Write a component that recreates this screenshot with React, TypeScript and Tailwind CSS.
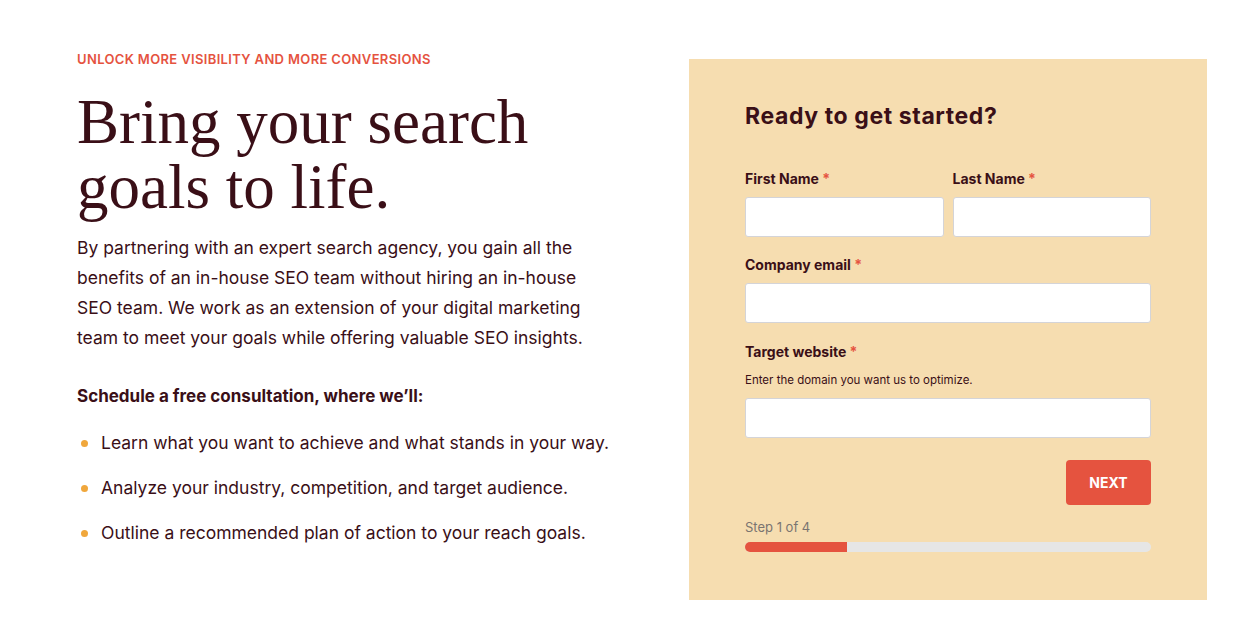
import React from "react";

const sans = { fontFamily: '"Inter", "Noto Sans", sans-serif' };

function Field({ label, help, className = "" }: { label: string; help?: string; className?: string }) {
  return (
    <div className={`flex flex-col ${className}`}>
      <label className="text-[14px] font-bold text-[#3a0f17] leading-[18px]">
        {label} <span className="text-[#e5533f]">*</span>
      </label>
      {help && <p className="mt-[12px] text-[11.5px] text-[#3a0f17] leading-[14px]">{help}</p>}
      <div className={`${help ? "mt-[11px]" : "mt-[9px]"} h-[40px] bg-white border border-[#d4d4d8] rounded-[3px]`} />
    </div>
  );
}

export default function App() {
  return (
    <div className="w-[1245px] h-[624px] bg-white flex" style={sans}>
      <div className="w-[612px] pl-[77px] pt-[51px]">
        <p className="text-[13px] font-semibold tracking-[0.35px] text-[#e5533f] leading-[16px]">
          UNLOCK MORE VISIBILITY AND MORE CONVERSIONS
        </p>
        <h1
          className="mt-[23px] text-[63px] leading-[65px] text-[#3a0f17]"
          style={{ fontFamily: '"Liberation Serif", "DejaVu Serif", serif' }}
        >
          Bring your search
          <br />
          goals to life.
        </h1>
        <p className="mt-[13px] w-[520px] text-[17.5px] leading-[30px] text-[#3a0f17]">
          By partnering with an expert search agency, you gain all the benefits of an in-house SEO team without hiring an
          in-house SEO team. We work as an extension of your digital marketing team to meet your goals while offering
          valuable SEO insights.
        </p>
        <p className="mt-[32px] text-[17px] font-bold text-[#3a0f17] leading-[22px]">
          Schedule a free consultation, where we’ll:
        </p>
        <ul className="mt-[24px] flex flex-col gap-[21px]">
          {[
            "Learn what you want to achieve and what stands in your way.",
            "Analyze your industry, competition, and target audience.",
            "Outline a recommended plan of action to your reach goals.",
          ].map((t) => (
            <li key={t} className="flex items-center text-[17.5px] leading-[24px] text-[#3a0f17]">
              <span className="ml-[4px] mr-[13px] w-[7px] h-[7px] rounded-full bg-[#f0a73c]" />
              {t}
            </li>
          ))}
        </ul>
      </div>
      <div className="ml-[77px] mt-[59px] w-[518px] h-[541px] bg-[#f6ddb0] px-[56px] pt-[42px]">
        <h2 className="text-[23px] font-bold tracking-[0.6px] text-[#3a0f17] leading-[30px]">Ready to get started?</h2>
        <div className="mt-[39px] flex gap-[9px]">
          <Field label="First Name" className="flex-1" />
          <Field label="Last Name" className="flex-1" />
        </div>
        <Field label="Company email" className="mt-[19px]" />
        <Field
          label="Target website"
          help="Enter the domain you want us to optimize."
          className="mt-[20px]"
        />
        <div className="mt-[22px] flex justify-end">
          <button className="w-[85px] h-[45px] bg-[#e5533f] rounded-[4px] text-white text-[14px] font-bold">
            NEXT
          </button>
        </div>
        <p className="mt-[14px] text-[13px] text-[#7a7470] leading-[16px]">Step 1 of 4</p>
        <div className="mt-[7px] h-[10px] rounded-full bg-[#e6e6e6] overflow-hidden">
          <div className="h-full w-[25%] bg-[#e5533f]" />
        </div>
      </div>
    </div>
  );
}
